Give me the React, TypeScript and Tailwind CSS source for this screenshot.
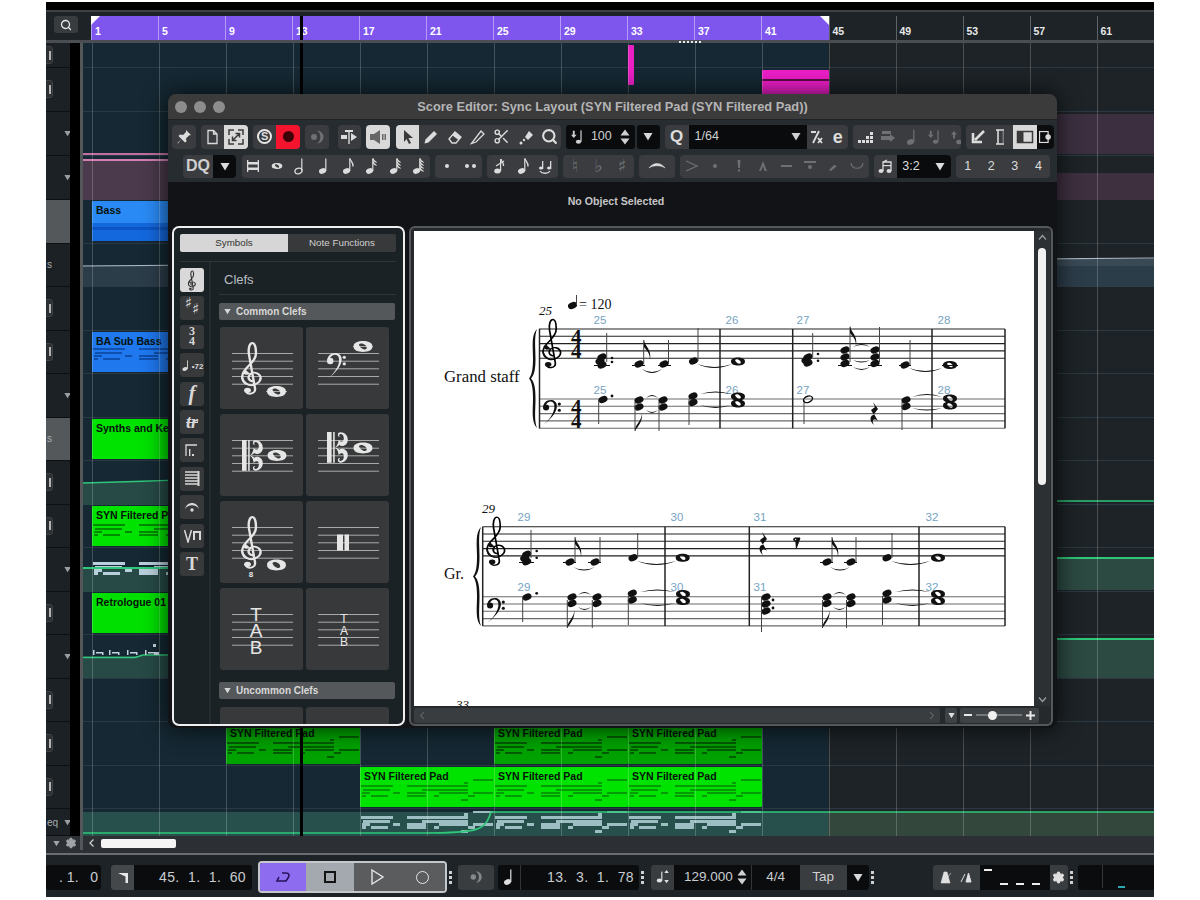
import React from "react";
import { Scissors, Search, Settings } from "lucide-react";

/* ---------- generic small parts ---------- */
const Svg = ({ children, w = 18, h = 18, vb = "0 0 18 18", className = "" }: any) => (
  <svg width={w} height={h} viewBox={vb} className={className} fill="currentColor">{children}</svg>
);
const Group = ({ children, className = "" }: any) => (
  <div className={`flex h-[23.5px] shrink-0 rounded-[4px] bg-[#3a3c3f] overflow-hidden text-[#dcdcdc] ${className}`}>{children}</div>
);
const Cell = ({ children, active = false, dim = false, className = "" }: any) => (
  <div className={`flex h-full w-[23.6px] shrink-0 items-center justify-center ${active ? "bg-[#d9d9d9] text-[#3a3a3a]" : dim ? "text-[#6e7174]" : ""} ${className}`}>{children}</div>
);
const Caret = ({ className = "" }: any) => <Svg w={10} h={9} vb="0 0 10 9" className={className}><path d="M0.5 1h9L5 8.5z" /></Svg>;
const Spin = () => (
  <Svg w={10} h={18} vb="0 0 10 18"><path d="M5 1.5l4.5 6H.5zM5 16.5l-4.5-6h9z" /></Svg>
);

const NoteIcon = ({ flags = 0, hollow = false }: any) => (
  <Svg>
    <ellipse cx="7.5" cy="14" rx="3.6" ry="2.7" transform="rotate(-20 7.5 14)" fill={hollow ? "none" : "currentColor"} stroke="currentColor" strokeWidth={hollow ? 1.3 : 0} />
    <rect x="10.2" y="1.5" width="1.2" height="12.5" />
    {Array.from({ length: flags }).map((_, i) => (
      <path key={i} d={`M11 ${1.5 + i * 3}c.5 3 3.5 3.5 3 ${flags === 1 ? 8 : 4}`} fill="none" stroke="currentColor" strokeWidth="1.4" />
    ))}
  </Svg>
);

const Glyph = ({ t }: any) => (
  <span className="font-['DejaVu_Sans',sans-serif] text-[18px] leading-none">{t}</span>
);

/* ---------- clefs (drawn on a unit where a staff is 40 high, lines every 10) ---------- */
const TrebleClef = ({ x, y, s = 1, sw = 2.4 }: any) => (
  <g transform={`translate(${x} ${y}) scale(${s * 1.3} ${s})`}>
    <path d="M13 37C8 37 6 32 9 27.5C12 24 18 25 19.5 31C20.5 38 13 43 8 41.5C1 39 -1 30 4 22C8 15 15 10 15 0C15 -6 14 -13 11.5 -13C8.5 -13 7 -6 8 2L14 46C15 54 5 55 5 49" fill="none" stroke="currentColor" strokeWidth={sw} />
    <path d="M9 27C3 31 0 25 4 20L2 23C0 32 4 39 9 41C16 43 20 37 19 31C21 38 14 44 8 42C0 40 -2 30 4 21" />
    <circle cx="6.5" cy="48.5" r="3.4" />
  </g>
);
const BassClef = ({ x, y, s = 1 }: any) => (
  <g transform={`translate(${x} ${y}) scale(${s})`}>
    <circle cx="4.5" cy="11" r="4.5" />
    <path d="M0.5 11C0 3 7 -1 13 0C24 2 25 18 1 36C14 25 18 14 16.5 7C15 1 8 1 5 6z" />
    <circle cx="24" cy="6" r="2.3" />
    <circle cx="24" cy="15" r="2.3" />
  </g>
);
const CClef = ({ x, y, s = 1 }: any) => {
  const half = "M10.5 20C14 17 15 13 15 10C17 12.5 19 13 20.5 12C23 10 22 2.5 18 2.5C15.5 2.5 15 5 17 6C15 7 13 4 15 1C19 -1.5 27 2 27 10C27 17 20 20 16 17C15 18 14 19 10.5 20z";
  return (
    <g transform={`translate(${x} ${y}) scale(${s})`}>
      <rect x="0" y="0" width="6" height="40" />
      <rect x="8" y="0" width="2" height="40" />
      <path d={half} />
      <path d={half} transform="matrix(1 0 0 -1 0 40)" />
    </g>
  );
};
const Whole = ({ x, y, s = 1 }: any) => (
  <path transform={`translate(${x} ${y}) scale(${s})`} fillRule="evenodd"
    d="M-7 0C-7 -3 -3.5 -4 0 -4C3.5 -4 7 -3 7 0C7 3 3.5 4 0 4C-3.5 4 -7 3 -7 0zM-3 -1.5C-2.5 1 1.5 3.5 2.7 1.5C3.5 -1 -1.5 -3.5 -3 -1.5z" />
);

/* ---------- clef tiles ---------- */
const Tile = ({ children, staff = true }: any) => (
  <div className="h-[82.5px] w-[82.5px] rounded-[3px] bg-[#38393b] text-[#e6e6e6]">
    <svg width="82.5" height="82.5" viewBox="0 0 82.5 82.5" fill="currentColor">
      {staff && [26, 33.7, 41.3, 49, 56.7].map((y) => <rect key={y} x="12" y={y} width="61" height="1" fill="#a8a8a8" />)}
      {children}
    </svg>
  </div>
);
const Ledger = ({ y }: any) => <rect x="47" y={y} width="20" height="1" fill="#a8a8a8" />;

const Side = ({ children, active = false }: any) => (
  <div className={`flex h-[24px] w-[24px] shrink-0 items-center justify-center rounded-[3px] ${active ? "bg-[#d9d9d9] text-[#333]" : "bg-[#38393b] text-[#d8d8d8]"}`}>{children}</div>
);
const Panel = () => (
  <div className="ml-[4px] mt-[4px] flex h-[500px] w-[233px] shrink-0 flex-col rounded-[7px] border-2 border-[#eeeeee] bg-[#1b2226] pl-[6px] pr-[7px] pt-[6px]">
    <div className="flex h-[18px] w-[216px] text-[9.8px]">
      <div className="flex w-[108px] items-center justify-center rounded-l-[2px] bg-[#d6d6d6] text-[#333]">Symbols</div>
      <div className="flex flex-1 items-center justify-center rounded-r-[2px] bg-[#38393b] text-[#d0d0d0]">Note Functions</div>
    </div>
    <div className="mt-[9px] h-px w-[216px] bg-[#2f353a]" />
    <div className="flex min-h-0 flex-1">
      <div className="flex w-[31px] flex-col gap-[4.4px] border-r-2 border-[#252b30] pt-[6px]">
        <Side active><svg width="16" height="21" viewBox="-2 -16 32 72" fill="currentColor"><TrebleClef x={0} y={0} sw={3} /></svg></Side>
        <Side><div className="flex font-['DejaVu_Sans',sans-serif] text-[15px] font-bold leading-none"><span className="-mt-[3px]">♯</span><span className="mt-[3px]">♯</span></div></Side>
        <Side><div className="flex flex-col items-center font-['Liberation_Serif',serif] text-[12px] font-bold leading-[9.5px]"><span>3</span><span>4</span></div></Side>
        <Side><div className="flex items-center"><Svg w={12} h={18}><ellipse cx="6" cy="15" rx="4" ry="2.8" transform="rotate(-20 6 15)" /><rect x="9" y="2" width="1.3" height="13" /></Svg><span className="-ml-[1px] mt-[3px] text-[8px] font-bold">•72</span></div></Side>
        <Side><span className="font-['Liberation_Serif',serif] text-[21px] font-bold italic leading-none">f</span></Side>
        <Side><span className="font-['Liberation_Serif',serif] text-[18px] font-bold italic leading-none line-through">tr</span></Side>
        <Side><Svg w={16} h={16} vb="0 0 16 16"><path d="M2 14V3h11" fill="none" stroke="currentColor" strokeWidth="1.3" /><rect x="5" y="7" width="1.4" height="7" /><rect x="8" y="12" width="2" height="2" /></Svg></Side>
        <Side><Svg w={16} h={18} vb="0 0 16 18"><path d="M1 2h14M1 5h14M1 8h14M1 11h14M1 14h14" stroke="currentColor" strokeWidth="1.3" /><rect x="13.5" y="1" width="2" height="15" /></Svg></Side>
        <Side><Svg w={18} h={14} vb="0 0 18 14"><path d="M2 9C4 1 14 1 16 9C13 4 5 4 2 9z" /><circle cx="9" cy="10" r="1.7" /></Svg></Side>
        <Side><div className="flex items-start gap-[1px]"><Svg w={8} h={14} vb="0 0 8 14"><path d="M.5 1L4 13 7.5 1" fill="none" stroke="currentColor" strokeWidth="1.5" /></Svg><Svg w={8} h={14} vb="0 0 8 14"><path d="M1 11V3h6v8" fill="none" stroke="currentColor" strokeWidth="2" /></Svg></div></Side>
        <Side><span className="font-['Liberation_Serif',serif] text-[18px] font-bold leading-none">T</span></Side>
      </div>
      <div className="min-w-0 flex-1 overflow-hidden pl-[8px] pb-[7px]">
        <div className="flex h-[33px] items-end border-b border-[#2f353a] pb-[8px] pl-[5px] text-[13px] leading-none text-[#b9bec2]">Clefs</div>
        <div className="mt-[7.5px] flex h-[17px] w-[176px] items-center gap-[5px] rounded-[2px] bg-[#55585a] pl-[5px] text-[10px] font-bold text-[#d8d8d8]"><Caret className="h-[7px] w-[7px]" />Common Clefs</div>
        <div className="ml-[1px] mt-[7px] grid w-[170px] grid-cols-2 gap-x-[2px] gap-y-[4.5px]">
          <Tile><TrebleClef x={21} y={26} s={0.77} /><rect x="46" y="64" width="21" height="1" fill="#a8a8a8" /><Whole x={56.5} y={64.5} s={1.35} /></Tile>
          <Tile><BassClef x={21} y={26} s={0.72} /><Ledger y={19} /><Whole x={57} y={19.5} s={1.35} /></Tile>
          <Tile><CClef x={22} y={26} s={0.77} /><Whole x={57} y={41.5} s={1.35} /></Tile>
          <Tile><CClef x={21} y={18} s={0.77} /><Whole x={57} y={34} s={1.35} /></Tile>
          <Tile><TrebleClef x={21} y={26} s={0.77} /><text x="31" y="76" fontSize="8" fontWeight="700" textAnchor="middle">8</text><Whole x={56.5} y={64} s={1.35} /></Tile>
          <Tile><rect x="31" y="33.5" width="6" height="16" /><rect x="38.5" y="33.5" width="4.5" height="16" /></Tile>
          <Tile><text x="36" y="32.5" fontSize="19" textAnchor="middle">T</text><text x="36" y="49" fontSize="19" textAnchor="middle">A</text><text x="36" y="65.5" fontSize="19" textAnchor="middle">B</text></Tile>
          <Tile><text x="38" y="35" fontSize="12" textAnchor="middle">T</text><text x="38" y="46.5" fontSize="12" textAnchor="middle">A</text><text x="38" y="57.5" fontSize="12" textAnchor="middle">B</text></Tile>
        </div>
        <div className="mt-[12px] flex h-[17px] w-[176px] items-center gap-[5px] rounded-[2px] bg-[#55585a] pl-[5px] text-[10px] font-bold text-[#d8d8d8]"><Caret className="h-[7px] w-[7px]" />Uncommon Clefs</div>
        <div className="ml-[1px] mt-[8px] grid w-[170px] grid-cols-2 gap-x-[2px]"><Tile staff={false} /><Tile staff={false} /></div>
      </div>
    </div>
  </div>
);

/* ---------- score ---------- */
type H = [number, number];
const Staff = ({ x1, x2, y }: any) => (
  <>{[0, 1, 2, 3, 4].map((i) => <line key={i} x1={x1} x2={x2} y1={y + i * 7.3} y2={y + i * 7.3} stroke={y > 390 && y < 410 || y > 590 ? "#6a6a6a" : "#222"} strokeWidth="1.1" />)}</>
);
const Heads = ({ p }: { p: H[] }) => <>{p.map(([x, y], i) => <ellipse key={i} cx={x} cy={y} rx="4.7" ry="3.3" transform={`rotate(-22 ${x} ${y})`} />)}</>;
const Stem = ({ x, a, b }: any) => <line x1={x} x2={x} y1={a} y2={b} stroke="#444" strokeWidth="1" />;
const Tie = ({ a, b, y, d }: any) => {
  const m = (a + b) / 2;
  return <path d={`M${a} ${y}Q${m} ${y + 2 * d} ${b} ${y}Q${m} ${y + 2 * d - Math.sign(d) * 1.8} ${a} ${y}z`} />;
};
const FlagUp = ({ x, y }: any) => <path d={`M${x} ${y}C${x + 1} ${y + 7} ${x + 8} ${y + 9} ${x + 6} ${y + 20}C${x + 6} ${y + 12} ${x + 2} ${y + 10} ${x} ${y + 7}z`} />;
const FlagDown = ({ x, y }: any) => <path d={`M${x} ${y}C${x} ${y - 7} ${x + 7} ${y - 10} ${x + 7} ${y - 18}C${x + 8} ${y - 10} ${x + 3} ${y - 5} ${x} ${y}z`} />;
const QRest = ({ x, y }: any) => <path d={`M${x - 1} ${y}L${x + 4} ${y + 7}L${x} ${y + 12}L${x + 4} ${y + 19}C${x} ${y + 16} ${x - 3} ${y + 18} ${x} ${y + 23}C${x - 6} ${y + 18} ${x - 3} ${y + 12} ${x} ${y + 13}L${x - 3} ${y + 8}L${x + 1} ${y + 5}z`} />;
const Bars = ({ xs, a, b, w = 1.5 }: any) => <>{xs.map((x: number) => <line key={x} x1={x} x2={x} y1={a} y2={b} stroke="#222" strokeWidth={w} />)}</>;
const Brace = ({ x, y, h }: any) => (
  <path transform={`translate(${x} ${y}) scale(1 ${h / 100})`} d="M8 0C2 6 4 18 4 30C4 40 3 46 0 50C3 54 4 60 4 70C4 82 2 94 8 100C5 92 6.5 82 6.5 70C6.5 60 5.5 54 2 50C5.5 46 6.5 40 6.5 30C6.5 18 5 8 8 0z" />
);
const Blue = ({ x, y, t }: any) => <text x={x} y={y} fontSize="11.5" fill="#76a3c4" textAnchor="middle" fontFamily="Liberation Sans, sans-serif">{t}</text>;
const Serif = ({ x, y, t, size = 14, italic = false, bold = false }: any) => (
  <text x={x} y={y} fontSize={size} fontStyle={italic ? "italic" : undefined} fontWeight={bold ? 700 : undefined} fontFamily="Liberation Serif, serif">{t}</text>
);
const Ftime = ({ x, y }: any) => (<><Serif x={x} y={y} t="4" size={21} bold /><Serif x={x} y={y + 14.5} t="4" size={21} bold /></>);

const Score = () => (
  <svg width="620" height="475" viewBox="414 231 620 475" fill="#111" className="block shrink-0 bg-white">
    {/* system 1 */}
    <Staff x1={539} x2={1005} y={329} />
    <Staff x1={539} x2={1005} y={399} />
    <Bars xs={[539.5, 720, 792.7, 932, 1005]} a={329} b={428.3} />
    <Brace x={529} y={329} h={99} />
    <TrebleClef x={542} y={329} s={0.73} sw={1.8} />
    <BassClef x={543} y={400} s={0.68} />
    <Ftime x={571} y={343.5} />
    <Ftime x={571} y={413.5} />
    <Serif x={539} y={315} t="25" size={13} italic />
    <Heads p={[[572.5, 305.5]]} />
    <Stem x={576.5} a={295} b={305} />
    <Serif x={579} y={309} t="= 120" size={14} />
    <Serif x={444} y={381.5} t="Grand staff" size={16.8} />
    {[[600, 323.5, "25"], [732, 323.5, "26"], [803, 323.5, "27"], [944, 323.5, "28"], [600, 394, "25"], [732, 394, "26"], [803, 394, "27"], [944, 394, "28"]].map(([x, y, t], i) => <Blue key={i} x={x} y={y} t={t} />)}
    <Heads p={[[602, 357], [602, 365], [600, 361], [639, 364], [664, 364], [693.5, 361], [808, 357], [808, 363], [806, 360], [845, 350], [845, 357], [845, 363.5], [875, 350], [875, 357], [875, 363.5], [905, 365]]} />
    <rect x="594" y="365" width="16" height="1" /><rect x="632" y="365" width="13" height="1" /><rect x="658" y="365" width="13" height="1" /><rect x="838" y="365" width="14" height="1" /><rect x="868" y="365" width="14" height="1" /><rect x="899" y="365" width="12" height="1" /><rect x="942" y="365" width="16" height="1" />
    <Stem x={606.7} a={333} b={362} /><Stem x={643.7} a={340} b={364} /><Stem x={668.5} a={340} b={364} /><Stem x={698} a={328} b={361} />
    <Stem x={812.7} a={333} b={357} /><Stem x={850} a={326.7} b={362} /><Stem x={879.5} a={327} b={362} /><Stem x={910} a={340} b={365} />
    <FlagUp x={644} y={340} /><FlagUp x={850} y={326} />
    <Whole x={738} y={361.5} /><Whole x={950} y={365} />
    <circle cx="612" cy="358" r="1.3" /><circle cx="612" cy="362" r="1.3" /><circle cx="818" cy="354" r="1.3" /><circle cx="818" cy="360.7" r="1.3" />
    <Tie a={642} b={662} y={369} d={4} /><Tie a={697} b={732} y={364} d={4} />
    <Tie a={853} b={870} y={347} d={-3} /><Tie a={853} b={870} y={360} d={2.5} /><Tie a={853} b={870} y={367} d={3} /><Tie a={909} b={942} y={368} d={4} />
    <Heads p={[[603, 399.5], [639, 400], [639, 407], [663, 400], [663, 407], [693, 396], [693, 402.5], [906, 400], [906, 406.5]]} />
    <Stem x={598.7} a={400} b={424} /><Stem x={635} a={402} b={431} /><Stem x={659} a={402} b={431} /><Stem x={689} a={399} b={425} /><Stem x={804} a={400} b={424} /><Stem x={902} a={402} b={430} />
    <FlagDown x={635} y={431} />
    <circle cx="612" cy="396" r="1.4" />
    <ellipse cx="808" cy="399.3" rx="4.7" ry="3" transform="rotate(-22 808 399.3)" fill="none" stroke="#111" strokeWidth="1.4" />
    <Whole x={738} y={396.5} /><Whole x={738} y={403.5} /><Whole x={950} y={398.5} /><Whole x={950} y={405.5} />
    <QRest x={874} y={402} />
    <Tie a={646} b={658} y={398} d={-3} /><Tie a={646} b={658} y={410} d={3} /><Tie a={700} b={731} y={394} d={-2.5} /><Tie a={700} b={731} y={405} d={3} /><Tie a={912} b={942} y={397} d={-3} /><Tie a={912} b={942} y={408} d={2.5} />

    {/* system 2 */}
    <Staff x1={482.7} x2={1005} y={526.7} />
    <Staff x1={482.7} x2={1005} y={596.7} />
    <Bars xs={[482.7, 665, 749.3, 919, 1005]} a={526.7} b={626} />
    <Brace x={473} y={527} h={99} />
    <TrebleClef x={486} y={526.7} s={0.73} sw={1.8} />
    <BassClef x={487} y={598} s={0.68} />
    <Serif x={482} y={513} t="29" size={13} italic />
    <Serif x={444} y={579} t="Gr." size={16} />
    {[[524, 521], [677, 521], [760, 521], [932, 521]].map(([x, y], i) => <Blue key={i} x={x} y={y} t={["29", "30", "31", "32"][i]} />)}
    {[[524, 591], [677, 591], [760, 591], [932, 591]].map(([x, y], i) => <Blue key={i} x={x} y={y} t={["29", "30", "31", "32"][i]} />)}
    <Heads p={[[526.7, 554.3], [526.7, 561.7], [524.7, 558], [570, 562], [595, 562], [633, 557.7], [827, 562], [851, 562], [887, 557.7]]} />
    <rect x="519" y="562" width="15" height="1" /><rect x="563" y="562" width="13" height="1" /><rect x="588" y="562" width="13" height="1" /><rect x="820" y="562" width="13" height="1" /><rect x="844" y="562" width="13" height="1" />
    <Stem x={531} a={530} b={558} /><Stem x={575} a={537} b={562} /><Stem x={600} a={537} b={562} /><Stem x={637.7} a={533} b={558} /><Stem x={832} a={537} b={562} /><Stem x={856} a={537} b={562} /><Stem x={892} a={533} b={558} />
    <FlagUp x={575} y={537} /><FlagUp x={832} y={537} />
    <circle cx="536.7" cy="551" r="1.3" /><circle cx="536.7" cy="557.7" r="1.3" />
    <Whole x={682.7} y={557.7} /><Whole x={938} y={557.7} />
    <Tie a={573} b={595} y={567} d={3.5} /><Tie a={637} b={676} y={561} d={4} /><Tie a={830} b={850} y={567} d={3.5} /><Tie a={891} b={930} y={561} d={4} />
    <QRest x={763} y={532} />
    <path d="M795 538h5l-4 11M795 538a1.5 1.5 0 1 0 .1 0z" stroke="#111" strokeWidth="1" fill="#111" />
    <Heads p={[[527, 597], [572, 597], [572, 603.5], [597, 597], [597, 603.5], [632.3, 593.3], [632.3, 600], [766, 597], [766, 604], [766, 611], [827, 597], [827, 603.5], [851, 597], [851, 603.5], [887, 593.3], [887, 600]]} />
    <Stem x={522.7} a={597} b={622} /><Stem x={567.3} a={600} b={628} /><Stem x={592.3} a={600} b={628} /><Stem x={628.3} a={596} b={625} /><Stem x={761.5} a={597} b={632} /><Stem x={822.5} a={600} b={628} /><Stem x={846.5} a={600} b={628} /><Stem x={882.5} a={596} b={625} />
    <FlagDown x={567.3} y={628} /><FlagDown x={822.5} y={628} />
    <circle cx="536.7" cy="593.3" r="1.4" /><circle cx="773" cy="600" r="1.4" /><circle cx="773" cy="608" r="1.4" />
    <Whole x={683} y={594} /><Whole x={683} y={601} /><Whole x={938} y={594} /><Whole x={938} y={601} />
    <Tie a={578} b={591} y={595} d={-3} /><Tie a={578} b={591} y={607} d={3} /><Tie a={640} b={675} y={592} d={-2.5} /><Tie a={640} b={675} y={603} d={3} /><Tie a={833} b={846} y={595} d={-3} /><Tie a={833} b={846} y={607} d={3} /><Tie a={895} b={930} y={592} d={-2.5} /><Tie a={895} b={930} y={603} d={3} />
    <Serif x={456} y={709} t="33" size={13} italic />
  </svg>
);

const ScorePanel = () => (
  <div className="ml-[4px] mt-[4px] flex h-[500px] w-[644px] shrink-0 flex-col rounded-[6px] border-2 border-[#55585b] bg-[#26292c] pl-[3px] pt-[3px]">
    <div className="flex h-[475px]">
      <Score />
      <div className="flex w-[16px] flex-col items-center justify-between bg-[#2c3033] py-[3px] text-[#9a9ea2]">
        <div className="flex w-full flex-1 flex-col items-center">
          <Svg w={9} h={7} vb="0 0 9 7"><path d="M1 5.5l3.5-4 3.5 4" fill="none" stroke="currentColor" strokeWidth="1.2" /></Svg>
          <div className="mt-[7px] h-[237px] w-[8px] rounded-[4px] bg-[#f2f2f2]" />
        </div>
        <Svg w={9} h={7} vb="0 0 9 7"><path d="M1 1.5l3.5 4 3.5-4" fill="none" stroke="currentColor" strokeWidth="1.2" /></Svg>
      </div>
    </div>
    <div className="flex h-[17px] items-center pt-[1px]">
      <div className="flex h-[15px] w-[526px] items-center justify-between rounded-[2px] bg-[#3a3d40] px-[5px] text-[#5e6265]">
        <Svg w={6} h={9} vb="0 0 6 9"><path d="M5 1L1.5 4.5 5 8" fill="none" stroke="currentColor" strokeWidth="1.1" /></Svg>
        <Svg w={6} h={9} vb="0 0 6 9"><path d="M1 1l3.5 3.5L1 8" fill="none" stroke="currentColor" strokeWidth="1.1" /></Svg>
      </div>
      <div className="ml-[5px] flex h-[15px] w-[12px] items-center justify-center rounded-[2px] bg-[#3f4245] text-[#ddd]"><Caret className="h-[7px] w-[7px]" /></div>
      <div className="ml-[3px] flex h-[15px] w-[79px] items-center gap-[4px] rounded-[2px] bg-[#3f4245] px-[4px] text-[#e8e8e8]">
        <span className="h-[2px] w-[8px] bg-current" />
        <div className="flex h-[2px] flex-1 items-center bg-[#777] pl-[12px]"><span className="h-[9px] w-[9px] rounded-full bg-[#f0f0f0]" /></div>
        <Svg w={9} h={9} vb="0 0 9 9"><path d="M3.5 0h2v3.5H9v2H5.5V9h-2V5.5H0v-2h3.5z" /></Svg>
      </div>
    </div>
  </div>
);

/* ---------- score editor toolbar ---------- */
const VelIcon = () => <Svg w={17}><path d="M3 2.5h2v4h2L4 10 1 6.5h2z" /><ellipse cx="9" cy="14" rx="2.8" ry="2.2" /><rect x="11" y="2" width="1.3" height="12" /></Svg>;
const Toolbar = () => (
  <div className="h-[62px] shrink-0 bg-[#272c30] pt-[5px] text-[12.5px]">
    <div className="flex pl-[4px]">
      <Group><Cell><Svg><path d="M11 2l5 5-2 .5-3 3 .5 3-1.5 1L6.5 11 3 15.5l-.5-.5L6.5 11 3.5 8 5 6.5l3 .5 3-3z" /></Svg></Cell></Group>
      <Group className="ml-[5px]">
        <Cell><Svg><path d="M5 2.5h5.5L14 6v9.5H5zM10.5 2.5V6H14" fill="none" stroke="currentColor" strokeWidth="1.3" /></Svg></Cell>
        <Cell active><Svg><path d="M2 7V2h5M11 2h5v5M16 11v5h-5M7 16H2v-5M6 12l6-6M8.5 5.5h4v4M9.5 12.5h-4v-4" fill="none" stroke="currentColor" strokeWidth="1.5" /></Svg></Cell>
      </Group>
      <Group className="ml-[5px]">
        <Cell><div className="flex h-[15px] w-[15px] items-center justify-center rounded-full border-2 border-[#e6e6e6] text-[11px] font-bold leading-none">S</div></Cell>
        <Cell className="bg-[#f5142e]"><span className="h-[11px] w-[11px] rounded-full bg-[#3d0208]" /></Cell>
      </Group>
      <Group className="ml-[5px]"><Cell dim><Svg><circle cx="6" cy="9" r="3" /><path d="M9 2.5A6.5 6.5 0 0 1 9 15.5 8 8 0 0 0 9 2.5z" /></Svg></Cell></Group>
      <Group className="ml-[9px]"><Cell><Svg><rect x="5" y="2" width="8" height="2" /><rect x="8.3" y="2" width="1.4" height="14" /><rect x="1" y="7" width="6" height="4" /><path d="M11 5l6 4-6 4z" /></Svg></Cell></Group>
      <Group className="ml-[5px]"><Cell active className="text-[#666]"><Svg><rect x="1" y="6" width="4" height="6" /><path d="M5 6l6-4v14l-6-4z" /><rect x="13" y="6" width="1.5" height="6" /><rect x="15.5" y="6" width="1.5" height="6" /></Svg></Cell></Group>
      <Group className="ml-[6px]">
        <Cell active><Svg><path d="M5 2l9 8H9.5l2.5 5-2 1-2.5-5L5 14z" /></Svg></Cell>
        <Cell><Svg><path d="M2.5 15.5l1-4L12 3l3 3-8.5 8.5z" /></Svg></Cell>
        <Cell><Svg><path d="M3 11l6-7 6 5-5 6H6z" fill="none" stroke="currentColor" strokeWidth="1.3" /><path d="M6.5 7.5L9 4l6 5-2.5 3z" /></Svg></Cell>
        <Cell><Svg><path d="M2.5 15.5L12 3l3 3-8 8z" fill="none" stroke="currentColor" strokeWidth="1.3" /></Svg></Cell>
        <Cell><Scissors size={17} strokeWidth={2} /></Cell>
        <Cell><Svg><path d="M8 9l4-6 4 4-5 5z" /><circle cx="4" cy="15" r="1.5" /><circle cx="7" cy="12" r="1.2" /></Svg></Cell>
        <Cell><Search size={17} strokeWidth={3} /></Cell>
      </Group>
      <div className="ml-[5px] flex h-[23.5px] w-[69px] items-center rounded-[3px] bg-[#090b0d] text-[#cfcfcf]">
        <span className="ml-[4px]"><VelIcon /></span>
        <span className="ml-[4px] w-[24px]">100</span><span className="ml-[5px]"><Spin /></span>
      </div>
      <div className="ml-[2px] flex h-[23.5px] w-[23px] items-center justify-center rounded-[3px] bg-[#090b0d] text-[#d8d8d8]"><Caret /></div>
      <Group className="ml-[5px]">
        <Cell className="text-[17px] font-bold">Q</Cell>
        <div className="flex w-[118.4px] items-center justify-between bg-[#090b0d] px-[6px] text-[#cfcfcf]"><span>1/64</span><Caret /></div>
        <Cell className="w-[20.5px]!"><Svg w={15} h={16} vb="0 0 15 16"><path d="M1 3h5M3 14L9 2M8 9l4 5M8 14l4-5" fill="none" stroke="currentColor" strokeWidth="1.8" /></Svg></Cell>
        <Cell className="w-[20.5px]!"><span className="text-[18px] font-bold leading-none">e</span></Cell>
      </Group>
      <Group className="ml-[5px] w-[108px]">
        <Cell><Svg><rect x="2" y="12" width="3" height="3" /><rect x="6" y="12" width="3" height="3" /><rect x="10" y="12" width="3" height="3" /><rect x="14" y="12" width="3" height="3" /><rect x="10" y="8" width="3" height="3" /><rect x="14" y="8" width="3" height="3" /><rect x="14" y="4" width="3" height="3" /></Svg></Cell>
        <Cell dim><Svg><rect x="3" y="3" width="9" height="3" /><path d="M2 8h9V6l5 4-5 4v-2H2z" /></Svg></Cell>
        <Cell dim><NoteIcon /></Cell>
        <Cell dim><VelIcon /></Cell>
        <Cell dim><Svg><path d="M4 3L1 6.5h2v4h2v-4h2z" /><ellipse cx="9" cy="14" rx="2.8" ry="2.2" /><rect x="11" y="2" width="1.3" height="12" /></Svg></Cell>
      </Group>
      <Group className="ml-[5px] w-[88px]">
        <Cell className="w-[23.5px]"><Svg><path d="M15 3L6 12M4 5v9h9" fill="none" stroke="currentColor" strokeWidth="2.6" /></Svg></Cell>
        <Cell className="w-[23.5px]"><Svg><path d="M4 2h8M4 16h8M6 2v14" fill="none" stroke="currentColor" strokeWidth="1.6" /><rect x="10.5" y="3" width="1.5" height="12" fill="#777" /></Svg></Cell>
        <Cell active><Svg><rect x="1.5" y="3.5" width="15" height="11" fill="none" stroke="currentColor" strokeWidth="1.5" /><rect x="1.5" y="3.5" width="6" height="11" /></Svg></Cell>
        <div className="flex flex-1 items-center justify-center bg-[#0b0d0f]"><Svg w={14} h={14}><rect x="2" y="2" width="11" height="14" fill="none" stroke="currentColor" strokeWidth="1.5" /><circle cx="13" cy="9" r="3.5" /></Svg></div>
      </Group>
    </div>
    <div className="mt-[6px] flex pl-[15px]">
      <Group>
        <div className="flex w-[30px] items-center justify-center text-[16px] font-bold text-[#cfcfcf]">DQ</div>
        <div className="flex w-[23px] items-center justify-center bg-[#090b0d]"><Caret /></div>
      </Group>
      <Group className="ml-[5.5px]">
        <Cell><Svg><rect x="3" y="3" width="1.3" height="12" /><rect x="13.7" y="3" width="1.3" height="12" /><rect x="3" y="5" width="12" height="2.5" /><rect x="3" y="10.5" width="12" height="2.5" /></Svg></Cell>
        <Cell><Svg w={16} h={16}><Whole x={9} y={9} s={0.85} /></Svg></Cell>
        <Cell><NoteIcon hollow /></Cell>
        <Cell><NoteIcon /></Cell>
        <Cell><NoteIcon flags={1} /></Cell>
        <Cell><NoteIcon flags={2} /></Cell>
        <Cell><NoteIcon flags={3} /></Cell>
        <Cell><NoteIcon flags={4} /></Cell>
      </Group>
      <Group className="ml-[5px]">
        <Cell><span className="h-[4px] w-[4px] rounded-full bg-current" /></Cell>
        <Cell className="gap-[3px]"><span className="h-[4px] w-[4px] rounded-full bg-current" /><span className="h-[4px] w-[4px] rounded-full bg-current" /></Cell>
      </Group>
      <Group className="ml-[5px]">
        <Cell><Svg><ellipse cx="7.5" cy="14" rx="3.3" ry="2.5" /><rect x="10" y="2" width="1.2" height="12" /><path d="M11 2c.5 3 3 3.5 2.5 7" fill="none" stroke="currentColor" strokeWidth="1.3" /><path d="M6 9l8-5" stroke="currentColor" strokeWidth="1.2" /></Svg></Cell>
        <Cell><NoteIcon flags={1} /></Cell>
        <Cell><Svg><rect x="5" y="4" width="1.3" height="8" /><rect x="13" y="4" width="1.3" height="8" /><ellipse cx="4" cy="11" rx="2" ry="1.5" /><ellipse cx="12" cy="11" rx="2" ry="1.5" /><path d="M3 14c2 3 8 3 10 0" fill="none" stroke="currentColor" strokeWidth="1.3" /></Svg></Cell>
      </Group>
      <Group className="ml-[5px]">
        <Cell dim><Glyph t="♮" /></Cell><Cell dim><Glyph t="♭" /></Cell><Cell dim><Glyph t="♯" /></Cell>
      </Group>
      <Group className="ml-[5px] w-[36px] items-center justify-center">
        <Svg w={20} h={10} vb="0 0 20 10"><path d="M2 7C6 1 14 1 18 7C14 4 6 4 2 7z" stroke="currentColor" strokeWidth=".5" /></Svg>
      </Group>
      <Group className="ml-[5px]">
        <Cell dim><Svg><path d="M3 4l11 5-11 5" fill="none" stroke="currentColor" strokeWidth="1.3" /></Svg></Cell>
        <Cell dim><span className="h-[4px] w-[4px] rounded-full bg-current" /></Cell>
        <Cell dim><Svg><path d="M7.5 3h3l-.7 8H8.2z" /><rect x="8" y="12.5" width="2" height="2" /></Svg></Cell>
        <Cell dim><Svg><path d="M9 4l4 10h-2.5L9 9 7 14H5z" /></Svg></Cell>
        <Cell dim><span className="h-[2px] w-[11px] bg-current" /></Cell>
        <Cell dim><Svg><rect x="3" y="4" width="12" height="2" /><circle cx="9" cy="10" r="2" /></Svg></Cell>
        <Cell dim><Svg><path d="M5 13l5-5 3 1-6 5z" /></Svg></Cell>
        <Cell dim><Svg><path d="M3 6c1 7 11 7 12 0" fill="none" stroke="currentColor" strokeWidth="1.2" /></Svg></Cell>
      </Group>
      <Group className="ml-[5px]">
        <Cell><Svg><ellipse cx="4" cy="14" rx="2.5" ry="2" /><ellipse cx="12" cy="14" rx="2.5" ry="2" /><path d="M6 14V5h8v9M6 5l4-2" fill="none" stroke="currentColor" strokeWidth="1.3" /><rect x="6" y="8" width="8" height="1.2" /></Svg></Cell>
        <div className="flex w-[53.5px] items-center justify-between bg-[#090b0d] pl-[5px] pr-[6px]"><span>3:2</span><Caret /></div>
      </Group>
      <Group className="ml-[5px]">
        {["1", "2", "3", "4"].map((n) => <Cell key={n}>{n}</Cell>)}
      </Group>
    </div>
  </div>
);

const ScoreWindow = () => (
  <div className="absolute left-[122px] top-[94px] flex h-[634px] w-[889px] flex-col overflow-hidden rounded-[8px] bg-[#121317] shadow-[0_0_24px_rgba(0,0,0,0.75)]">
    <div className="grid h-[26px] shrink-0 grid-cols-[1fr_auto_1fr] items-center border-b border-[#1f2326] bg-[#3b3b3c]">
      <div className="flex gap-[7px] pl-[7px]">
        <span className="h-[12px] w-[12px] rounded-full bg-[#8d8d8d]" /><span className="h-[12px] w-[12px] rounded-full bg-[#8d8d8d]" /><span className="h-[12px] w-[12px] rounded-full bg-[#8d8d8d]" />
      </div>
      <div className="text-[12.8px] font-bold text-[#b4b4b4]">Score Editor: Sync Layout (SYN Filtered Pad (SYN Filtered Pad))</div>
    </div>
    <Toolbar />
    <div className="flex h-[40px] shrink-0 items-center justify-center pl-[7px] text-[10.6px] font-bold text-[#c6c6c6]">No Object Selected</div>
    <div className="flex min-h-0 flex-1">
      <Panel />
      <ScorePanel />
    </div>
  </div>
);

/* ---------- arrange view ---------- */
const PATTERN: [number, number, number][] = [[113, 12, 20], [104, 15, 4], [1, 18, 32], [47, 18, 61], [3, 22, 27], [62, 22, 46], [2, 25, 8], [33, 25, 7], [47, 25, 19], [79, 25, 29], [113, 25, 20], [2, 28, 4], [11, 28, 17], [47, 28, 19], [74, 28, 5], [108, 28, 7], [101, 32, 7]];
const Midi = ({ color, dy = 0, h = 2 }: any) => (
  <svg width="134" height="40" viewBox="0 0 134 40" className="absolute left-0 top-0" fill={color}>
    {PATTERN.map(([x, y, w], i) => <rect key={i} x={x} y={y + dy} width={w} height={h} />)}
  </svg>
);
const Ev = ({ x, w = 134, label, cls, children }: any) => (
  <div className={`absolute top-[1.5px] h-[40px] overflow-hidden rounded-[1px] ${cls}`} style={{ left: x - 83, width: w }}>
    {children}
    {label && <div className="relative whitespace-nowrap pl-[4px] pt-[3px] text-[10.5px] font-bold leading-[13px] text-[#06120a]">{label}</div>}
  </div>
);
const Notes = ({ x, w = 134, top, h = 26, dy = -10, color = "#b9d0dc" }: any) => (
  <div className="absolute overflow-hidden" style={{ left: x - 83, top, width: w, height: h }}>
    <svg width="134" height="40" viewBox="0 0 134 40" fill={color}>
      {PATTERN.map(([nx, y, nw], i) => <rect key={i} x={nx} y={y + dy} width={nw} height="3" />)}
    </svg>
  </div>
);
const Band = ({ x, w, top, h, cls }: any) => <div className={`absolute ${cls}`} style={{ left: x - 83, width: w, top, height: h }} />;
const GREEN = "bg-[#00e200]";
const ROWS: any[] = [
  { h: 25, btn: 1, el: <Ev x={628} w={6} cls="bg-[#ea1fc4]" /> },
  { h: 43.5, btn: 1, el: <Ev x={762} w={67} cls="bg-[#ee1ec8]"><div className="mt-[9px] h-[2px] bg-[#5a0a45]" /></Ev> },
  { h: 44, arrow: 1, el: <Band x={1050} w={104} top={2} h={40} cls="bg-[#3c3040]" /> },
  { h: 44, arrow: 1, el: <><Band x={83} w={745} top={4} h={40} cls="bg-[#4b3a4c]" /><Band x={83} w={745} top={-2.5} h={2} cls="bg-[#c06fa2]" /><Band x={83} w={745} top={3.5} h={2} cls="bg-[#d47fb2]" /><Band x={828} w={326} top={17} h={27} cls="bg-[#3f3040]" /></> },
  { h: 44, gray: 1, el: <Ev x={92} cls="bg-[#2a8af5]" label="Bass"><div className="absolute bottom-0 left-0 h-[18px] w-full bg-[#1468de]" /><div className="absolute bottom-[11px] left-0 h-[3px] w-full bg-[#0c55c4]" /></Ev> },
  { h: 43.5, text: "s", el: <><Band x={83} w={1071} top={21} h={22.5} cls="bg-[#2c3d4a]" /><Band x={1057} w={97} top={15} h={7} cls="bg-[#3a4a55]" /><svg width="1071" height="44" className="absolute left-0 top-0"><path d="M0 22L1071 14" stroke="#a9b7c0" strokeWidth="1.2" fill="none" /></svg></> },
  { h: 43.5, btn: 1 },
  { h: 43.5, btn: 1, el: <Ev x={92} cls="bg-[#1f78ee]" label="BA Sub Bass"><Midi color="#0e4fb0" dy={-2} /></Ev> },
  { h: 43.5, arrow: 1 },
  { h: 43.5, gray: 1, text: "s", el: <Ev x={92} cls={GREEN} label="Synths and Keys" /> },
  { h: 43.5, btn: 1, el: <><Band x={83} w={745} top={21} h={22.5} cls="bg-[#274a47]" /><svg width="1071" height="44" className="absolute left-0 top-0"><path d="M0 22L85 19.5" stroke="#2fc77a" strokeWidth="1.5" fill="none" /><path d="M974 40H1071" stroke="#2fc77a" strokeWidth="1.5" fill="none" /></svg></> },
  { h: 43.5, btn: 1, el: <Ev x={92} cls={GREEN} label="SYN Filtered Pad"><Midi color="#008a00" /></Ev> },
  { h: 43.5, arrow: 1, el: <><Band x={83} w={745} top={20} h={23.5} cls="bg-[#274a47]" /><Band x={828} w={326} top={9} h={33} cls="bg-[#2c4a42]" /><Notes x={92} top={4} h={35} dy={-8} /><Band x={83} w={85} top={19} h={1.5} cls="bg-[#2fc77a]" /><Band x={1050} w={104} top={9} h={1.5} cls="bg-[#2fc77a]" /></> },
  { h: 43.5, btn: 1, el: <Ev x={92} cls="bg-[#00e000]" label="Retrologue 01" /> },
  { h: 43.5, arrow: 1, el: <><Band x={83} w={745} top={21} h={22} cls="bg-[#274a47]" /><Band x={828} w={326} top={3} h={40} cls="bg-[#2c4a42]" /><Band x={1050} w={104} top={3} h={1.5} cls="bg-[#2fc77a]" /><svg width="120" height="44" className="absolute left-0 top-0" fill="#c4d4dc"><path d="M0 22.5H52L60 20H85" stroke="#2fc77a" strokeWidth="1.5" fill="none" />{[10, 26, 44, 62].map((x) => <g key={x}><rect x={x} y="15" width="1.5" height="5" /><rect x={x + 3} y="17" width="6" height="1.5" /><rect x={x + 9} y="17" width="1.5" height="3" /></g>)}<rect x="70" y="9" width="3" height="3" /><rect x="72" y="17" width="4" height="3" /></svg></> },
  { h: 43.5, btn: 1 },
  { h: 43.5, btn: 1, el: <>{[226, 494, 628].map((x) => <Ev key={x} x={x} cls="bg-[#00a200]" label="SYN Filtered Pad"><Midi color="#005c00" /></Ev>)}</> },
  { h: 43.5, btn: 1, el: <>{[360, 494, 628].map((x) => <Ev key={x} x={x} cls="bg-[#00e200]" label="SYN Filtered Pad"><Midi color="#069a06" /></Ev>)}</> },
  { h: 27, text: "eq", arrow: 1, el: <>
    <Band x={83} w={745} top={3} h={24} cls="bg-[#27504c]" /><Band x={828} w={326} top={3} h={24} cls="bg-[#33473c]" />
    <Notes x={360} top={2} h={25} dy={-13} color="#9dbfc3" /><Notes x={494} top={2} h={25} dy={-13} color="#9dbfc3" /><Notes x={628} top={2} h={25} dy={-13} color="#9dbfc3" />
    <svg width="1071" height="27" className="absolute left-0 top-0"><path d="M0 24H340C395 24 402 22 408 3H1071" stroke="#2fc77a" strokeWidth="1.7" fill="none" /></svg>
  </> },
];
const BARS = Array.from({ length: 16 }, (_, i) => 1 + i * 4);
const barX = (i: number) => 91.5 + i * 67;

const Dots = () => (
  <div className="mx-[2px] flex w-[3px] shrink-0 flex-col gap-[2px]"><span className="h-[3px] w-[3px] bg-[#d0d0d0]" /><span className="h-[3px] w-[3px] bg-[#d0d0d0]" /><span className="h-[3px] w-[3px] bg-[#d0d0d0]" /></div>
);
const Black = ({ children, className = "" }: any) => (
  <div className={`flex h-[25px] items-center rounded-[3px] bg-[#0a0c0e] text-[#c9cdd0] ${className}`}>{children}</div>
);

const Transport = () => (
  <div className="flex h-[40px] shrink-0 items-center whitespace-pre bg-[#1d2327] text-[14px] text-[#c9cdd0]">
    <Black className="w-[55px] justify-end pr-[3px]">{". 1.   0"}</Black>
    <div className="ml-[10px] flex h-[25px] w-[141px] overflow-hidden rounded-[3px] bg-[#0a0c0e]">
      <div className="flex w-[23px] items-center justify-center bg-[#45484b] text-[#e8e8e8]"><Svg w={14} h={14} vb="0 0 14 14"><path d="M2 3h10v10H9.5V6.5z" /></Svg></div>
      <div className="flex flex-1 items-center justify-end pr-[6px] tracking-[0.35px]">{"45.  1.  1.  60"}</div>
    </div>
    <div className="ml-[6px] flex h-[32px] w-[189px] overflow-hidden rounded-[4px] border-2 border-[#c4c8cb]">
      <div className="flex w-[46px] items-center justify-center bg-[#8e6cf0] text-[#241358]"><Svg w={18} h={14} vb="0 0 18 14"><path d="M8 3h4c3 0 4 2 2 5l-2 3H3l2-4" fill="none" stroke="currentColor" strokeWidth="1.6" /></Svg></div>
      <div className="flex w-[47.5px] items-center justify-center bg-[#a3a9ae]"><span className="h-[12px] w-[12px] border-2 border-[#141414]" /></div>
      <div className="flex flex-1 items-center bg-[#5b5c5e] text-[#e6e6e6]">
        <div className="flex w-[47px] justify-center"><Svg w={16} h={18} vb="0 0 16 18"><path d="M3 2l11 7-11 7z" fill="none" stroke="currentColor" strokeWidth="1.4" /></Svg></div>
        <div className="flex flex-1 justify-center"><span className="h-[13px] w-[13px] rounded-full border-[1.5px] border-[#e6e6e6]" /></div>
      </div>
    </div>
    <Dots />
    <div className="ml-[4px] flex h-[25px] w-[36px] items-center justify-center rounded-[3px] bg-[#3a3d40] text-[#85888b]"><Svg w={16} h={16}><circle cx="6" cy="9" r="3" /><path d="M9 2.5A6.5 6.5 0 0 1 9 15.5 8 8 0 0 0 9 2.5z" /></Svg></div>
    <div className="ml-[4px] flex h-[25px] w-[141px] overflow-hidden rounded-[3px] bg-[#0a0c0e]">
      <div className="flex w-[23px] items-center justify-center border-r border-[#30353a] text-[#e0e0e0]"><NoteIcon /></div>
      <div className="flex flex-1 items-center justify-end pr-[5px] tracking-[0.35px]">{"13.  3.  1.  78"}</div>
    </div>
    <Dots />
    <div className="ml-[5px] flex h-[25px] w-[217.5px] overflow-hidden rounded-[3px]">
      <div className="flex w-[23px] items-center justify-center bg-[#3a3d40] text-[#e0e0e0]"><Svg w={16} h={16}><ellipse cx="5" cy="13" rx="3" ry="2.2" /><rect x="7" y="3" width="1.3" height="10" /><path d="M13 1l2.5 3.5h-5zM13 16l-2.5-3.5h5z" /></Svg></div>
      <div className="flex w-[78px] items-center gap-[4px] border-r border-[#30353a] bg-[#0a0c0e] pl-[10px] text-[13.5px]"><span>129.000</span><span className="text-[#d0d0d0]"><Spin /></span></div>
      <div className="flex w-[47.5px] items-center justify-center bg-[#0a0c0e] text-[13.5px]">4/4</div>
      <div className="flex w-[47.5px] items-center justify-center bg-[#3a3d40] text-[13.5px] text-[#d0d0d0]">Tap</div>
      <div className="flex flex-1 items-center justify-center bg-[#0a0c0e] text-[#d8d8d8]"><Caret /></div>
    </div>
    <Dots />
    <div className="ml-[57px] flex h-[25px] w-[135.5px] overflow-hidden rounded-[3px] bg-[#3a3d40] text-[#e0e0e0]">
      <div className="flex w-[47px] items-center justify-center gap-[5px]">
        <Svg w={16} h={16} vb="0 0 16 16"><path d="M2 14L5 3h3l3 11zM8 9l4-5" fill="currentColor" stroke="currentColor" strokeWidth=".6" /></Svg>
        <Svg w={13} h={12} vb="0 0 13 12"><path d="M6 11H11L8.5 2zM1 11L5 3" stroke="currentColor" strokeWidth="1" /></Svg>
      </div>
      <div className="relative flex w-[70px] items-end gap-[8px] bg-[#0a0c0e] pb-[5px] pl-[20px]">
        <span className="absolute left-[4px] top-[4px] h-[2px] w-[8px] bg-[#eee]" />
        <span className="h-[2px] w-[8px] bg-[#eee]" /><span className="h-[2px] w-[8px] bg-[#eee]" /><span className="h-[2px] w-[8px] bg-[#eee]" />
      </div>
      <div className="flex flex-1 items-center justify-center"><Settings size={13} fill="currentColor" strokeWidth={2} /></div>
    </div>
    <Dots />
    <div className="ml-[3px] flex h-[25px] flex-1 items-end rounded-l-[3px] bg-[#0a0c0e] pb-[2px]">
      <div className="h-[23px] w-[25px] border-r border-[#33383c]" />
      <span className="ml-[15px] h-[2px] w-[7px] bg-[#2aa9b0]" />
    </div>
  </div>
);

export default function App() {
  return (
    <div className="flex h-[900px] w-[1200px] justify-center overflow-hidden bg-white font-['Liberation_Sans',sans-serif]">
      <div className="relative flex h-[897px] w-[1108px] flex-col bg-[#1d2327]">
        {/* top strips */}
        <div className="h-[2px] shrink-0 bg-white" />
        <div className="h-[8px] shrink-0 bg-black" />
        <div className="h-[2px] shrink-0 bg-[#3d4144]" />
        <div className="h-[4px] shrink-0 bg-[#1d2327]" />
        {/* header */}
        <div className="flex h-[24px] shrink-0">
          <div className="w-[37px] shrink-0 pl-[8px]">
            <div className="flex h-[17px] w-[24px] items-center justify-center rounded-[3px] bg-[#393c3f] text-[#e8e8e8]"><Search size={12} strokeWidth={2.6} /></div>
          </div>
          <div className="w-[8px] shrink-0" />
          <div className="relative flex w-[737.5px] shrink-0 overflow-hidden bg-[#7e56ee]">
            {BARS.slice(0, 11).map((b) => (
              <div key={b} className="flex h-full w-[67px] shrink-0 items-end border-l border-[#b59cf6] pb-[2px] pl-[3px] text-[10.5px] font-bold leading-[13px] text-white">{b}</div>
            ))}
            <span className="absolute left-0 top-0 h-0 w-0 border-r-[9px] border-t-[9px] border-r-transparent border-t-white" />
            <span className="absolute right-0 top-0 h-0 w-0 border-l-[9px] border-t-[9px] border-l-transparent border-t-white" />
            <span className="absolute left-[209px] top-0 h-full w-[3px] bg-black" />
          </div>
          <div className="flex flex-1">
            {BARS.slice(11).map((b) => (
              <div key={b} className="flex h-full w-[67px] shrink-0 items-end border-l border-[#5e6468] pb-[2px] pl-[3px] text-[10.5px] font-bold leading-[13px] text-[#e8e8e8]">{b}</div>
            ))}
          </div>
        </div>
        <div className="flex h-[3px] shrink-0 bg-[#4a4e52]"><div className="ml-[633px] mt-px h-[2px] w-[22px] border-t-2 border-dotted border-[#e8e8e8]" /></div>
        {/* body */}
        <div className="flex h-[793px] shrink-0">
          <div className="w-[24px] shrink-0 overflow-hidden">
            {ROWS.map((r, i) => (
              <div key={i} className={`flex items-center justify-between border-b border-[#0d0f11] text-[10px] text-[#a9adb0] ${r.gray ? "bg-[#55585b]" : "bg-[#1c2125]"}`} style={{ height: r.h }}>
                {r.text ? <span className="pl-[1px]">{r.text}</span> : <span className={`-ml-[6px] flex h-[18px] w-[13px] items-center justify-center rounded-[3px] text-[#b5b5b5] ${r.btn ? "border border-[#3f4346] bg-[#2c3033]" : ""}`}>{r.btn ? <span className="ml-[7px] h-[9px] w-[2px] bg-current" /> : null}</span>}
                {r.arrow && <span className="mr-[-1px] text-[#9a9ea2]"><Caret className="h-[7px] w-[7px]" /></span>}
              </div>
            ))}
          </div>
          <div className="w-[10px] shrink-0 bg-black" />
          <div className="w-[3px] shrink-0 bg-[#54575a]" />
          <div className="relative min-w-0 flex-1 overflow-hidden bg-[#1d2327]">
            <div className="absolute left-0 top-0 h-full w-[745px] bg-[#152833]" />
            {ROWS.map((r, i) => (
              <div key={i} className="relative border-b border-[#2c3942]" style={{ height: r.h }}>{r.el}</div>
            ))}
            {BARS.map((_, i) => <div key={i} className="absolute top-0 h-full w-px bg-white/20" style={{ left: barX(i) - 83 }} />)}
            <div className="absolute left-[217px] top-0 h-full w-[3px] bg-black" />
          </div>
        </div>
        {/* scroll row */}
        <div className="flex h-[14px] shrink-0 bg-[#2c3034]">
          <div className="flex w-[34px] items-center justify-end gap-[5px] pr-[3px] text-[#a0a4a8]"><Caret className="h-[7px] w-[7px]" /><Settings size={12} fill="currentColor" /></div>
          <div className="w-[3px] bg-[#54575a]" />
          <div className="flex items-center pl-[5px] text-[#d0d0d0]"><Svg w={7} h={10} vb="0 0 7 10"><path d="M5.5 1.5L2 5l3.5 3.5" fill="none" stroke="currentColor" strokeWidth="1.3" /></Svg></div>
          <div className="ml-[6px] mt-[3px] h-[9px] w-[75px] rounded-[2px] bg-[#f4f4f4]" />
        </div>
        <div className="h-[3px] shrink-0 bg-[#2c3034]" />
        <div className="h-[2px] shrink-0 bg-[#6a6e71]" />
        <div className="h-[2px] shrink-0 bg-[#1d2327]" />
        <Transport />
        <ScoreWindow />
      </div>
    </div>
  );
}
